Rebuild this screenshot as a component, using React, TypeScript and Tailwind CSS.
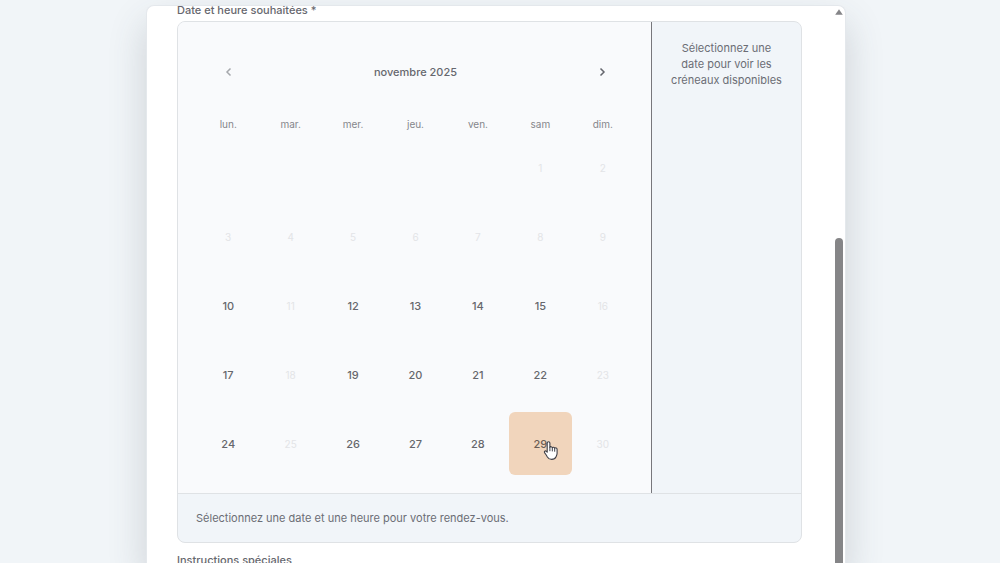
import { useState } from "react";

const WEEKDAYS = ["lun.", "mar.", "mer.", "jeu.", "ven.", "sam", "dim."];

const WEEKS: (number | null)[][] = [
  [null, null, null, null, null, 1, 2],
  [3, 4, 5, 6, 7, 8, 9],
  [10, 11, 12, 13, 14, 15, 16],
  [17, 18, 19, 20, 21, 22, 23],
  [24, 25, 26, 27, 28, 29, 30],
];

const UNAVAILABLE = new Set([1, 2, 3, 4, 5, 6, 7, 8, 9, 11, 16, 18, 23, 25, 30]);

function Chevron({ d }: { d: string }) {
  return (
    <svg viewBox="0 0 8 10" className="h-2.5 w-2" fill="none" stroke="currentColor" strokeWidth="1.5" aria-hidden="true">
      <path d={d} />
    </svg>
  );
}

function HandCursor() {
  return (
    <svg viewBox="0 0 16 21" className="pointer-events-none absolute top-[28px] left-[34px] h-[21px] w-4" aria-hidden="true">
      <path
        d="M4.2 12.2V3.1c0-1.9 2.7-1.9 2.7 0v4.1c.5-.8 2.1-.7 2.4.4.7-.7 2-.5 2.4.5.9-.7 2.4-.1 2.4 1.3v3.9c0 1.7-.6 2.4-1.2 3.7-.6 1.4-1.5 2.4-4.2 2.4-2.4 0-3.4-.9-4.3-2.5-.8-1.5-1.6-2.8-2.7-4.1-1-1.2.6-2.5 1.7-1.4z"
        fill="#fff"
        stroke="#3f3f46"
        strokeWidth="1.1"
        strokeLinejoin="round"
      />
      <path d="M6.9 7.2v3.6M9.3 7.7v3.3M11.7 8.3v3" stroke="#3f3f46" strokeWidth="1" strokeLinecap="round" />
    </svg>
  );
}

function Calendar() {
  const [active, setActive] = useState(29);
  return (
    <div className="min-w-0 flex-1 border-r border-[#77777c] bg-[#f9fafc] pt-[18px] pr-[17px] pb-[15px] pl-[19px]">
      <div className="flex h-16 items-center justify-between px-7">
        <button type="button" aria-label="Mois précédent" className="text-[#a6a8ac]">
          <Chevron d="M5.5 1.5 2 5l3.5 3.5" />
        </button>
        <h2 className="font-medium text-[#66676e]">novembre 2025</h2>
        <button type="button" aria-label="Mois suivant" className="text-[#66676e]">
          <Chevron d="M2.5 1.5 6 5 2.5 8.5" />
        </button>
      </div>
      <table className="mt-2.5 w-full table-fixed border-collapse text-center">
        <thead>
          <tr className="h-[19px]">
            {WEEKDAYS.map((day) => (
              <th key={day} scope="col" className="p-0 text-[10px] leading-4 font-normal text-[#85868b]">
                {day}
              </th>
            ))}
          </tr>
        </thead>
        <tbody>
          {WEEKS.map((week, row) => (
            <tr key={row} className="h-[69px]">
              {week.map((day, col) => (
                <td key={col} className="p-0">
                  {day !== null && (
                    <button
                      type="button"
                      disabled={UNAVAILABLE.has(day)}
                      onClick={() => setActive(day)}
                      className={
                        UNAVAILABLE.has(day)
                          ? "block h-[63px] w-full rounded-md text-[10px] text-[#e3e4e7]"
                          : day === active
                            ? "relative block h-[63px] w-full rounded-md bg-[#f1d5bc] font-medium text-[#6b5d55]"
                            : "block h-[63px] w-full rounded-md font-medium text-[#66676c]"
                      }
                    >
                      {day}
                      {day === active && <HandCursor />}
                    </button>
                  )}
                </td>
              ))}
            </tr>
          ))}
        </tbody>
      </table>
    </div>
  );
}

export default function App() {
  return (
    <main className="flex h-screen justify-center overflow-hidden bg-[#f1f5f8] pt-[5px] pr-2 font-[Inter,sans-serif] text-[11px] leading-4 text-[#6b6d75]">
      <section className="flex w-full max-w-[700px] overflow-hidden rounded-t-lg border border-b-0 border-[#e4e8ec] bg-white shadow-[0_18px_38px_rgba(60,70,80,0.2)]">
        <form className="-mt-1 min-w-0 flex-1 pr-[33px] pl-[30px]">
          <fieldset>
            <legend className="font-medium text-[#66676e]">Date et heure souhaitées *</legend>
            <div className="mt-[3px] overflow-hidden rounded-lg border border-[#dfe2e5] bg-[#f1f5f9]">
              <div className="flex">
                <Calendar />
                <aside className="w-[149px] px-[18px] pt-[18px] text-center">
                  <p>Sélectionnez une date pour voir les créneaux disponibles</p>
                </aside>
              </div>
              <p className="border-t border-[#dfe2e5] px-[18px] py-4">
                Sélectionnez une date et une heure pour votre rendez-vous.
              </p>
            </div>
          </fieldset>
          <label htmlFor="instructions" className="mt-[9px] block font-medium text-[#66676e]">
            Instructions spéciales
          </label>
          <textarea id="instructions" className="mt-1 block h-20 w-full rounded-lg border border-[#dfe2e5]" />
        </form>
        <div className="flex w-2.5 shrink-0 flex-col pt-[3px]" aria-hidden="true">
          <svg viewBox="0 0 8 6" className="h-1.5 w-2">
            <path d="M4 0.3 7.8 5.7H0.2z" fill="#858588" />
          </svg>
          <div className="mt-[223px] w-2 flex-1 rounded-t-full bg-[#858587]" />
        </div>
      </section>
    </main>
  );
}
